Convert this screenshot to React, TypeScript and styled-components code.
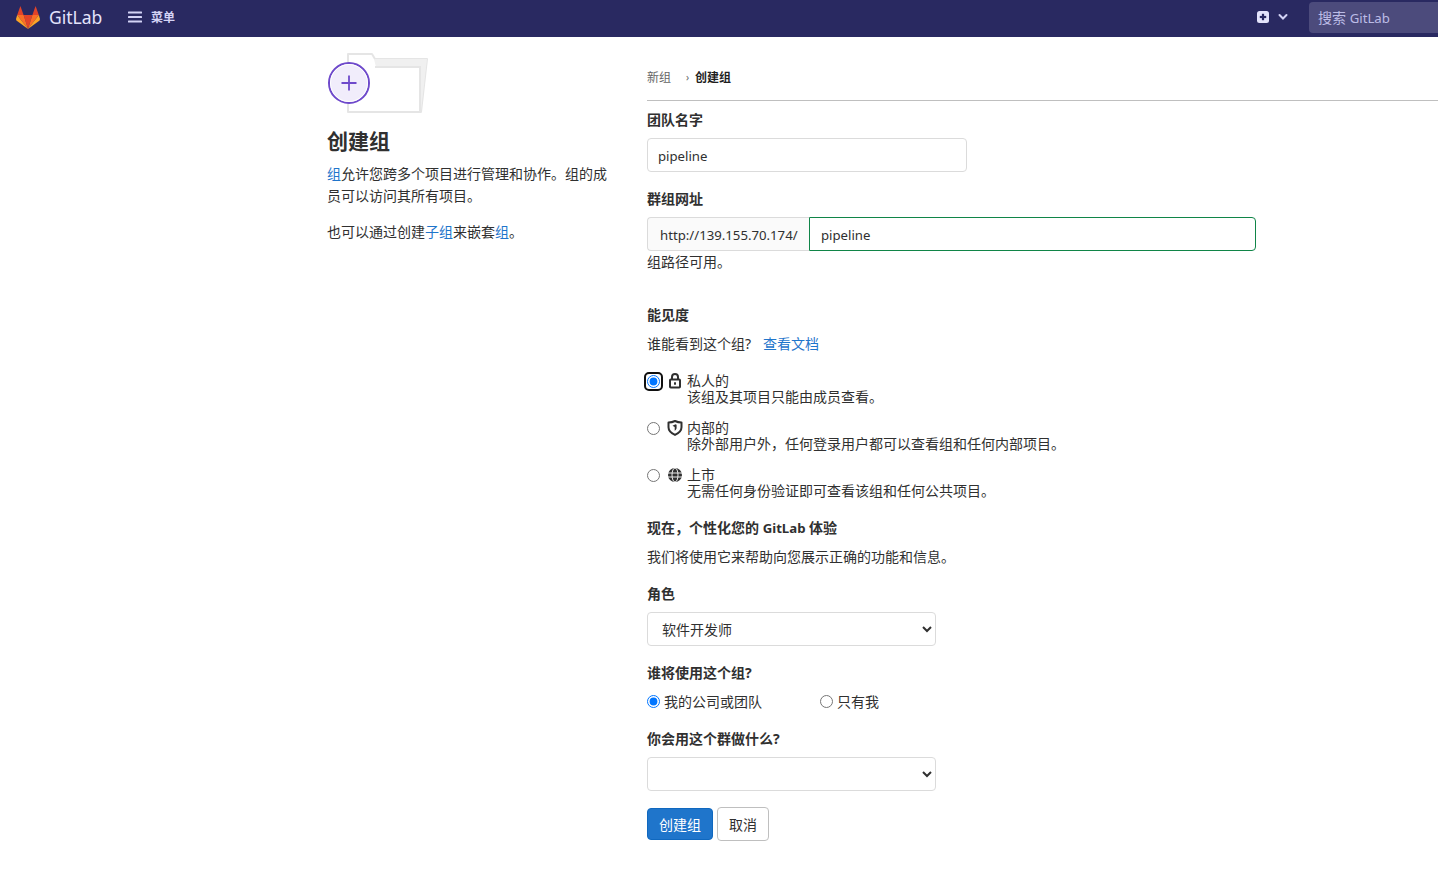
import React from 'react';
import styled, { createGlobalStyle } from 'styled-components';

const FONT = `'Noto Sans', 'Noto Sans CJK SC', sans-serif`;

const GlobalStyle = createGlobalStyle`
  html, body {
    margin: 0;
    padding: 0;
    background: #fff;
    overflow: hidden;
  }
  body {
    font-family: ${FONT};
    font-size: 14px;
    color: #303030;
  }
  * {
    box-sizing: border-box;
  }
`;

const TanukiLogo = () => (
  <svg width="24" height="23" viewBox="0 0 24 23">
    <polygon points="12,23 7.6,9 16.4,9" fill="#e24329" />
    <polygon points="12,23 7.6,9 1.2,9" fill="#fc6d26" />
    <polygon points="12,23 16.4,9 22.8,9" fill="#fc6d26" />
    <polygon points="1.2,9 0,13 0.4,14.6 12,23" fill="#fca326" />
    <polygon points="22.8,9 24,13 23.6,14.6 12,23" fill="#fca326" />
    <polygon points="1.2,9 4.4,0 7.6,9" fill="#e24329" />
    <polygon points="22.8,9 19.6,0 16.4,9" fill="#e24329" />
  </svg>
);

const MenuIcon = () => (
  <svg width="14" height="12" viewBox="0 0 14 12" fill="#d3d3f5">
    <rect y="0.5" width="14" height="2" rx="0.5" />
    <rect y="5" width="14" height="2" rx="0.5" />
    <rect y="9.5" width="14" height="2" rx="0.5" />
  </svg>
);

const PlusSquareIcon = () => (
  <svg width="12" height="12" viewBox="0 0 12 12">
    <rect width="12" height="12" rx="2.5" fill="#e3e3fb" />
    <rect x="4.900" y="2.800" width="2.200" height="6.400" fill="#292961" />
    <rect x="2.800" y="4.900" width="6.400" height="2.200" fill="#292961" />
  </svg>
);

const ChevronIcon = () => (
  <svg width="10" height="8" viewBox="0 0 10 8" fill="none">
    <path d="M1.5 2l3.5 3.5L8.5 2" stroke="#d3d3f5" strokeWidth="2" strokeLinecap="round" />
  </svg>
);

const LockIcon = () => (
  <svg width="12" height="16" viewBox="0 0 12 16" fill="none">
    <path d="M3 6.500V4a3 3 0 0 1 6 0v2.500" stroke="#303030" strokeWidth="2" />
    <rect x="1" y="6.500" width="10" height="8" rx="0.8" stroke="#303030" strokeWidth="2" />
    <rect x="5" y="9.300" width="2" height="2.400" fill="#303030" />
  </svg>
);

const ShieldIcon = () => (
  <svg width="16" height="16" viewBox="0 0 16 16" fill="none">
    <path d="M1.500 2.500C4 2.500 6 2 8 1c2 1 4 1.500 6.500 1.500v4.700c0 3.400-2.900 6-6.500 7.700-3.600-1.700-6.500-4.300-6.500-7.700V2.500z" stroke="#303030" strokeWidth="2" strokeLinejoin="round" />
    <path d="M8.500 4.300L5.500 5.800 7.700 7v3.800c1-.5 1.900-1.700 1.900-2.800V4.800l-1.100-.5z" fill="#303030" />
  </svg>
);

const GlobeIcon = () => (
  <svg width="14" height="15" viewBox="0 -1 14 15" fill="none">
    <circle cx="7" cy="7" r="7" fill="#303030" />
    <path d="M0 5h14M0 9h14" stroke="#fff" strokeWidth="0.900" />
    <ellipse cx="7" cy="7" rx="3" ry="7" stroke="#fff" strokeWidth="0.900" />
  </svg>
);

const FolderIllustration = () => (
  <svg width="102" height="60" viewBox="0 0 102 60" fill="none">
    <path d="M21 1h24l3 5h52l-6 53H21V1z" fill="#fff" stroke="#e5e5e5" strokeWidth="2" strokeLinejoin="round" />
    <path d="M47 6h53l-6 52h-1V14H49l-2-8z" fill="#f0f0f0" />
    <path d="M48 14h45v44" stroke="#e5e5e5" strokeWidth="2" />
    <circle cx="22" cy="30" r="20" fill="#f1edfb" stroke="#6e49cb" strokeWidth="2" />
    <circle cx="22" cy="30" r="18.500" stroke="#fff" strokeWidth="1" />
    <path d="M22 22.500v15M14.500 30h15" stroke="#6e49cb" strokeWidth="1.800" />
  </svg>
);

const Navbar = styled.header`
  display: flex;
  align-items: center;
  height: 37px;
  padding-left: 16px;
  background: #292961;
`;

const Brand = styled.div`
  display: flex;
  align-items: center;
  gap: 9px;
  width: 112px;
  margin-bottom: 4px;
  color: #e3e3fb;
  font-size: 17.500px;
  line-height: 24px;

  svg {
    margin-top: 2px;
  }
`;

const MenuButton = styled.div`
  display: flex;
  align-items: center;
  gap: 9px;
  margin-bottom: 3px;
  color: #d3d3f5;
  font-size: 12px;
  font-weight: 700;
`;

const NavRight = styled.div`
  display: flex;
  align-items: center;
  margin-left: auto;
`;

const NewButton = styled.div`
  display: flex;
  align-items: center;
  gap: 9px;
  margin-right: 21px;
  margin-bottom: 3px;
`;

const SearchBox = styled.div`
  width: 129px;
  height: 31px;
  margin-bottom: 2px;
  padding-left: 9px;
  border-radius: 4px 0 0 4px;
  background: #4c4b7c;
  color: #bcbce6;
  line-height: 31px;
`;

const LatinText = styled.span`
  font-size: 13.200px;
`;

const Page = styled.main`
  display: flex;
  padding-left: 327px;
`;

const Sidebar = styled.aside`
  width: 320px;
  padding: 16px 36px 0 0;
`;

const PageTitle = styled.h4`
  margin: 7px 0 5px;
  font-size: 21px;
  line-height: 34px;
  font-weight: 700;
  color: #303030;
`;

const SideText = styled.p`
  margin: 0 0 14px;
  line-height: 22px;
  font-size: 14px;
`;

const Link = styled.span`
  color: #1f75cb;
`;

const Content = styled.section`
  flex: 1;
`;

const Breadcrumbs = styled.nav`
  display: flex;
  align-items: center;
  height: 64px;
  padding-top: 17px;
  border-bottom: 1px solid #bfbfbf;
  font-size: 12px;
  color: #666;
`;

const Crumb = styled.span`
  width: 39px;
`;

const CrumbSeparator = styled.span`
  width: 9px;
  font-size: 10px;
`;

const CurrentCrumb = styled.span`
  font-weight: 700;
  color: #1f1f1f;
`;

const FieldLabel = styled.label<{ $top?: number }>`
  display: block;
  margin-top: ${p => p.$top ?? 0}px;
  font-weight: 700;
  font-size: 14px;
  line-height: 20px;
`;

const TextInput = styled.input`
  display: block;
  width: 320px;
  height: 34px;
  margin-top: 8px;
  padding: 1px 10px 0;
  border: 1px solid #dbdbdb;
  border-radius: 4px;
  font: 13.200px ${FONT};
  color: #303030;
  outline: none;
`;

const UrlGroup = styled.div`
  display: flex;
  width: 609px;
  height: 34px;
  margin-top: 8px;
`;

const UrlPrefix = styled.div`
  width: 162px;
  padding-left: 12px;
  border: 1px solid #dbdbdb;
  border-right: none;
  border-radius: 4px 0 0 4px;
  background: #fafafa;
  font-size: 13.200px;
  line-height: 34px;
  white-space: nowrap;
`;

const UrlInput = styled.input`
  flex: 1;
  padding: 1px 11px 0;
  border: 1px solid #108548;
  border-radius: 0 4px 4px 0;
  font: 13.200px ${FONT};
  color: #303030;
  outline: none;
`;

const HelpText = styled.div`
  height: 20px;
  line-height: 22px;
`;

const Paragraph = styled.p<{ $top: number }>`
  margin: ${p => p.$top}px 0 0;
  line-height: 20px;
`;

const DocLink = styled(Link)`
  margin-left: 12px;
`;

const VisibilityList = styled.div`
  display: flex;
  flex-direction: column;
  gap: 15px;
  margin-top: 19px;
`;

const VisibilityRow = styled.div`
  display: grid;
  grid-template-columns: 20px 20px 1fr;
  height: 32px;
`;

const RadioFrame = styled.span<{ $focused?: boolean }>`
  display: block;
  width: 15px;
  height: 15px;
  margin: ${p => (p.$focused ? '1px 0 0 -1px' : '1px 0 0 0')};
  padding: ${p => (p.$focused ? '1px' : '1px 0 0 0')};
  border-radius: 3px;
  ${p => p.$focused && 'outline: 2px solid #101010;'}
`;

const Radio = styled.input.attrs({ type: 'radio' })`
  display: block;
  width: 13px;
  height: 13px;
  margin: 0;
`;

const IconCell = styled.span`
  display: flex;
  justify-content: center;
  width: 16px;
`;

const VisibilityTitle = styled.div`
  height: 16px;
  line-height: 16px;
`;

const VisibilityHint = styled.div`
  height: 16px;
  line-height: 16px;
`;

const SelectField = styled.select`
  display: block;
  width: 289px;
  height: 34px;
  margin-top: 8px;
  padding: 0 10px;
  border: 1px solid #dbdbdb;
  border-radius: 4px;
  background: #fff;
  font: 14px ${FONT};
  color: #303030;
  outline: none;
`;

const InlineRadios = styled.div`
  display: flex;
  align-items: center;
  height: 20px;
  margin-top: 8px;
`;

const InlineRadio = styled.label<{ $width: number }>`
  display: flex;
  align-items: center;
  gap: 4px;
  width: ${p => p.$width}px;

  input {
    margin: 0;
  }
`;

const Actions = styled.div`
  display: flex;
  gap: 4px;
  margin-top: 17px;
`;

const PrimaryButton = styled.button`
  height: 32px;
  padding: 0 11px;
  border: 1px solid #1068bf;
  border-radius: 4px;
  background: #1f75cb;
  color: #fff;
  font: 14px ${FONT};
`;

const CancelButton = styled.button`
  height: 34px;
  margin-top: -1px;
  padding: 0 11px;
  border: 1px solid #bfbfbf;
  border-radius: 4px;
  background: #fff;
  color: #303030;
  font: 14px ${FONT};
`;

const visibilityOptions = [
  { icon: <LockIcon />, title: '私人的', text: '该组及其项目只能由成员查看。', checked: true },
  { icon: <ShieldIcon />, title: '内部的', text: '除外部用户外\uFF0C任何登录用户都可以查看组和任何内部项目。', checked: false },
  { icon: <GlobeIcon />, title: '上市', text: '无需任何身份验证即可查看该组和任何公共项目。', checked: false },
];

export default function App() {
  return (
    <>
      <GlobalStyle />
      <Navbar>
        <Brand>
          <TanukiLogo />
          GitLab
        </Brand>
        <MenuButton>
          <MenuIcon />
          菜单
        </MenuButton>
        <NavRight>
          <NewButton>
            <PlusSquareIcon />
            <ChevronIcon />
          </NewButton>
          <SearchBox>
            搜索 <LatinText>GitLab</LatinText>
          </SearchBox>
        </NavRight>
      </Navbar>
      <Page>
        <Sidebar>
          <FolderIllustration />
          <PageTitle>创建组</PageTitle>
          <SideText>
            <Link>组</Link>允许您跨多个项目进行管理和协作。组的成员可以访问其所有项目。
          </SideText>
          <SideText>
            也可以通过创建<Link>子组</Link>来嵌套<Link>组</Link>。
          </SideText>
        </Sidebar>
        <Content>
          <Breadcrumbs>
            <Crumb>新组</Crumb>
            <CrumbSeparator>›</CrumbSeparator>
            <CurrentCrumb>创建组</CurrentCrumb>
          </Breadcrumbs>
          <FieldLabel $top={9}>团队名字</FieldLabel>
          <TextInput defaultValue="pipeline" />
          <FieldLabel $top={17}>群组网址</FieldLabel>
          <UrlGroup>
            <UrlPrefix>http://139.155.70.174/</UrlPrefix>
            <UrlInput defaultValue="pipeline" />
          </UrlGroup>
          <HelpText>组路径可用。</HelpText>
          <FieldLabel $top={34}>能见度</FieldLabel>
          <Paragraph $top={9}>
            谁能看到这个组?<DocLink>查看文档</DocLink>
          </Paragraph>
          <VisibilityList>
            {visibilityOptions.map(option => (
              <VisibilityRow key={option.title}>
                <RadioFrame $focused={option.checked}>
                  <Radio name="visibility" defaultChecked={option.checked} />
                </RadioFrame>
                <IconCell>{option.icon}</IconCell>
                <div>
                  <VisibilityTitle>{option.title}</VisibilityTitle>
                  <VisibilityHint>{option.text}</VisibilityHint>
                </div>
              </VisibilityRow>
            ))}
          </VisibilityList>
          <FieldLabel $top={19}>
            现在{'\uFF0C'}个性化您的 <LatinText>GitLab</LatinText> 体验
          </FieldLabel>
          <Paragraph $top={9}>我们将使用它来帮助向您展示正确的功能和信息。</Paragraph>
          <FieldLabel $top={17}>角色</FieldLabel>
          <SelectField defaultValue="dev">
            <option value="dev">软件开发师</option>
          </SelectField>
          <FieldLabel $top={17}>谁将使用这个组?</FieldLabel>
          <InlineRadios>
            <InlineRadio $width={173}>
              <input type="radio" name="audience" defaultChecked />
              我的公司或团队
            </InlineRadio>
            <InlineRadio $width={100}>
              <input type="radio" name="audience" />
              只有我
            </InlineRadio>
          </InlineRadios>
          <FieldLabel $top={18}>你会用这个群做什么?</FieldLabel>
          <SelectField defaultValue="">
            <option value="" />
          </SelectField>
          <Actions>
            <PrimaryButton>创建组</PrimaryButton>
            <CancelButton>取消</CancelButton>
          </Actions>
        </Content>
      </Page>
    </>
  );
}
